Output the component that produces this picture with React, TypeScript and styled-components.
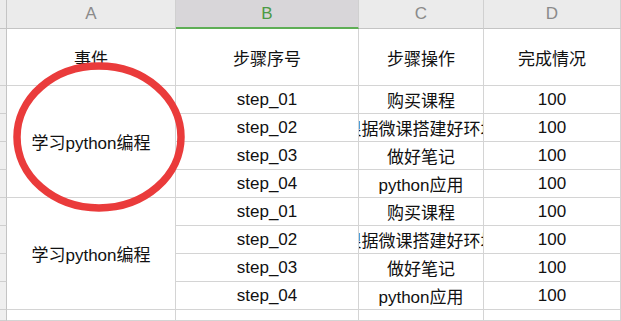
import React from 'react';
import styled, { createGlobalStyle } from 'styled-components';

const GlobalStyle = createGlobalStyle`
  html, body {
    margin: 0;
    padding: 0;
    background: #fff;
    overflow: hidden;
  }
  body {
    font-family: "Liberation Sans", "Noto Sans CJK SC", sans-serif;
  }
`;

const Sheet = styled.div`
  position: relative;
  width: 621px;
  height: 321px;
  overflow: hidden;
  display: grid;
  grid-template-columns: 7px 169px 183px 125px 1fr;
  grid-template-rows: 29px 57px repeat(8, 28px) 1fr;
  background: #fff;
`;

const ColHeader = styled.div<{ $active?: boolean }>`
  display: flex;
  align-items: center;
  justify-content: center;
  background: ${(p) => (p.$active ? '#d8d6d9' : '#ebebeb')};
  border-right: 1px solid #d0d0d0;
  border-bottom: ${(p) => (p.$active ? '2px solid #5eae55' : '1px solid #c4c4c4')};
  color: ${(p) => (p.$active ? '#4c9a45' : '#8a8a8a')};
  font-size: 17px;
  padding-top: ${(p) => (p.$active ? '1px' : '0')};
`;

const Corner = styled.div`
  background: #ebebeb;
  border-right: 1px solid #c4c4c4;
  border-bottom: 1px solid #c4c4c4;
`;

const RowHeader = styled.div<{ $span?: number }>`
  grid-column: 1;
  grid-row: span ${(p) => p.$span ?? 1};
  background: #efefef;
  border-right: 1px solid #c4c4c4;
  border-bottom: 1px solid #cfcfcf;
`;

const Cell = styled.div<{ $span?: number; $col?: number }>`
  display: flex;
  align-items: center;
  justify-content: center;
  grid-row: span ${(p) => p.$span ?? 1};
  ${(p) => (p.$col ? `grid-column: ${p.$col};` : '')}
  border-right: 1px solid #d4d4d4;
  border-bottom: 1px solid #d4d4d4;
  color: #111;
  font-size: 17px;
  white-space: nowrap;
  overflow: hidden;
  min-width: 0;
`;

const Ring = styled.svg`
  position: absolute;
  left: 10px;
  top: 58px;
  pointer-events: none;
`;

const steps = [
  ['step_01', '购买课程', '100'],
  ['step_02', '根据微课搭建好环境', '100'],
  ['step_03', '做好笔记', '100'],
  ['step_04', 'python应用', '100'],
];

const App = () => {
  const body: React.ReactNode[] = [];
  [0, 1].forEach((g) => {
    steps.forEach((s, i) => {
      const k = `${g}-${i}`;
      body.push(<RowHeader key={`r${k}`} />);
      if (i === 0) {
        body.push(
          <Cell key={`a${k}`} $span={4} $col={2}>
            学习python编程
          </Cell>
        );
      }
      body.push(
        <Cell key={`b${k}`} $col={3}>
          {s[0]}
        </Cell>,
        <Cell key={`c${k}`}>{s[1]}</Cell>,
        <Cell key={`d${k}`}>{s[2]}</Cell>
      );
    });
  });

  return (
    <>
      <GlobalStyle />
      <Sheet>
        <Corner />
        <ColHeader>A</ColHeader>
        <ColHeader $active>B</ColHeader>
        <ColHeader>C</ColHeader>
        <ColHeader>D</ColHeader>

        <RowHeader />
        <Cell>事件</Cell>
        <Cell>步骤序号</Cell>
        <Cell>步骤操作</Cell>
        <Cell>完成情况</Cell>

        {body}

        <RowHeader />
        <Cell />
        <Cell />
        <Cell />
        <Cell />

        <Ring width="180" height="160" viewBox="0 0 180 160">
          <ellipse cx="89" cy="79" rx="82" ry="71" fill="none" stroke="#ea3b3b" strokeWidth="7.5" />
        </Ring>
      </Sheet>
    </>
  );
};

export default App;
